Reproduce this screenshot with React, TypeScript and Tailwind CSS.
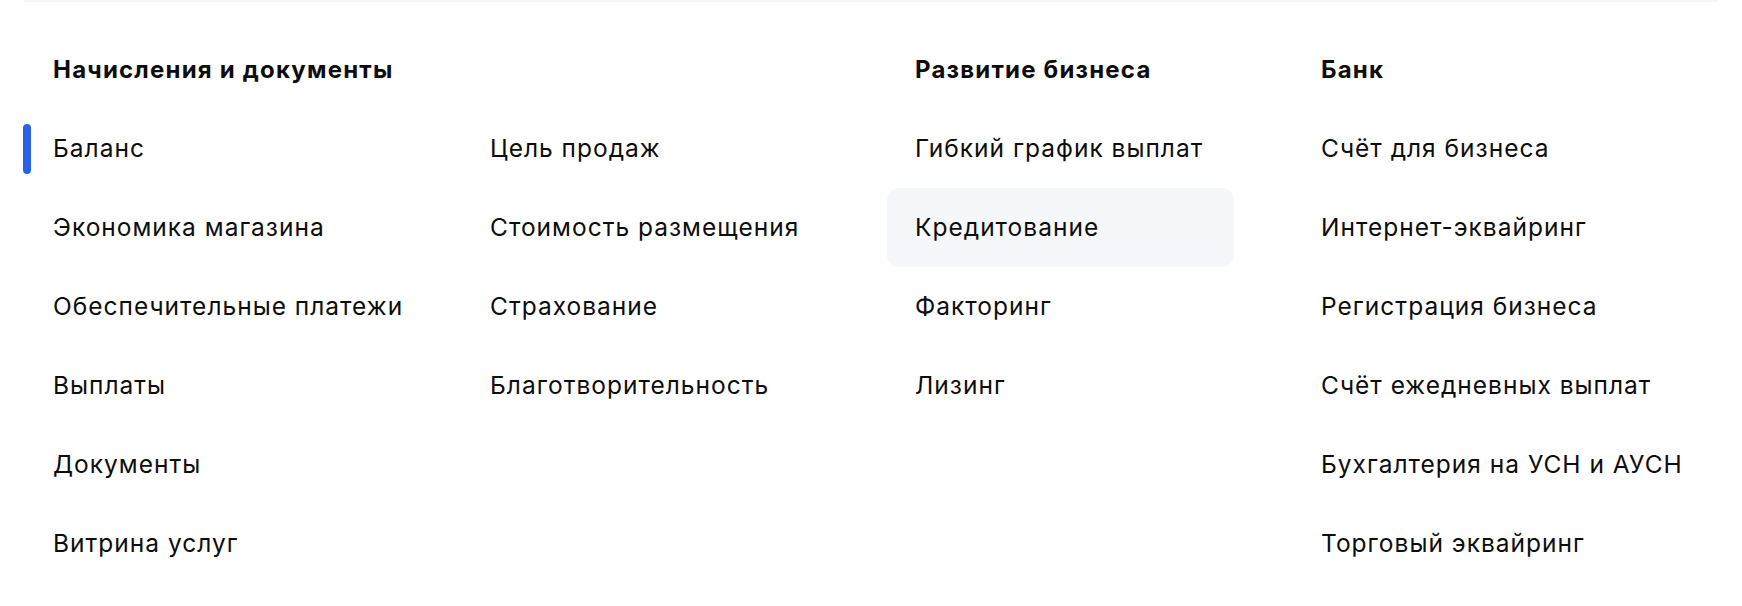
const sections = [
  {
    title: "Начисления и документы",
    width: "w-[437px]",
    pad: "pl-[31px]",
    items: ["Баланс", "Экономика магазина", "Обеспечительные платежи", "Выплаты", "Документы", "Витрина услуг"],
  },
  {
    title: "",
    width: "w-[428px]",
    pad: "pl-[31px]",
    items: ["Цель продаж", "Стоимость размещения", "Страхование", "Благотворительность"],
  },
  {
    title: "Развитие бизнеса",
    width: "w-[406px]",
    pad: "pl-[28px]",
    items: ["Гибкий график выплат", "Кредитование", "Факторинг", "Лизинг"],
  },
  {
    title: "Банк",
    width: "flex-1",
    pad: "pl-[28px]",
    items: [
      "Счёт для бизнеса",
      "Интернет-эквайринг",
      "Регистрация бизнеса",
      "Счёт ежедневных выплат",
      "Бухгалтерия на УСН и АУСН",
      "Торговый эквайринг",
    ],
  },
];

const ACTIVE = "Баланс";
const HOVER = "Кредитование";

export default function App() {
  return (
    <div className="w-[1742px] h-[606px] bg-white text-[#0d0d0d] font-['Inter',sans-serif] overflow-hidden">
      <div className="mx-[24px] h-[2px] bg-[#f5f5f7]" />
      <div className="flex pl-[22px] pt-[28px]">
        {sections.map((s, i) => (
          <div key={i} className={s.width}>
            <div className={"h-[79px] flex items-center text-[24px] font-bold tracking-[1.2px] " + s.pad}>
              {s.title}
            </div>
            <ul>
              {s.items.map((item) => (
                <li
                  key={item}
                  className={
                    "relative h-[79px] w-[347px] flex items-center text-[24.5px] tracking-[1px] rounded-[12px] " +
                    s.pad +
                    (item === HOVER ? " bg-[#f5f7fa]" : "")
                  }
                >
                  {item === ACTIVE && (
                    <span className="absolute left-[1px] top-[15px] h-[50px] w-[8px] rounded-full bg-[#2962e8]" />
                  )}
                  <span className="whitespace-nowrap">{item}</span>
                </li>
              ))}
            </ul>
          </div>
        ))}
      </div>
    </div>
  );
}
